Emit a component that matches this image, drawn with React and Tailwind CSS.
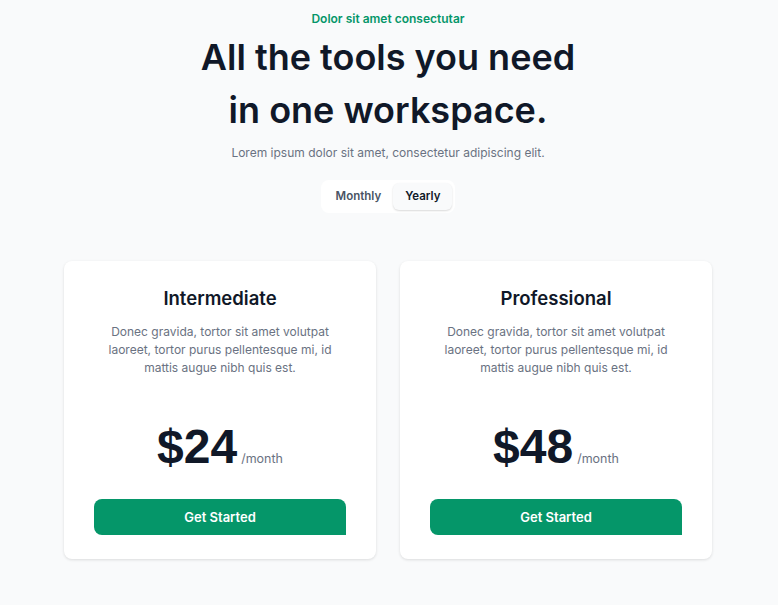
const plans = [
  { name: "Intermediate", price: "$24" },
  { name: "Professional", price: "$48" },
];

const PlanCard = ({ plan }) => {
  return (
    <div className="w-[312px] bg-white rounded-lg shadow-[0_1px_3px_rgba(0,0,0,0.12)] px-[30px] pt-6 pb-6 flex flex-col items-center">
      <h3 className="text-[18.5px] leading-[26px] font-semibold text-gray-900">{plan.name}</h3>
      <p className="mt-3 text-[12px] leading-[18px] text-gray-500 text-center">
        Donec gravida, tortor sit amet volutpat
        <br />
        laoreet, tortor purus pellentesque mi, id
        <br />
        mattis augue nibh quis est.
      </p>
      <div className="mt-[46px] flex items-end">
        <span className="font-['Liberation_Sans',Arial,sans-serif] font-bold text-[48px] leading-none text-gray-900">
          {plan.price}
        </span>
        <span className="ml-1 mb-0.5 text-[12.5px] text-gray-500">/month</span>
      </div>
      <button className="mt-7 w-full h-9 pt-px bg-[#059669] text-white text-[13px] font-semibold rounded-lg rounded-br-none">
        Get Started
      </button>
    </div>
  );
};

export default function App() {
  return (
    <div className="min-h-[605px] bg-gray-50 font-['Inter',sans-serif] flex flex-col items-center pt-[11px] pr-[2px]">
      <p className="text-[12px] leading-4 font-semibold text-[#059669]">Dolor sit amet consectutar</p>
      <h1 className="mt-[4px] text-[36px] leading-[53px] font-semibold text-gray-900 text-center">
        All the tools you need
        <br />
        in one workspace.
      </h1>
      <p className="mt-[6px] text-[12px] leading-5 text-gray-500">
        Lorem ipsum dolor sit amet, consectetur adipiscing elit.
      </p>
      <div className="mt-[17px] bg-white rounded-lg p-[3px] flex">
        <button className="h-[27px] px-3 text-[11.5px] font-semibold text-gray-600 rounded-md">Monthly</button>
        <button className="h-[27px] px-3 text-[11.5px] font-semibold text-gray-900 rounded-md bg-gray-50 shadow-[0_1px_2px_rgba(0,0,0,0.15)]">
          Yearly
        </button>
      </div>
      <div className="mt-[48px] flex gap-6">
        {plans.map((plan) => (
          <PlanCard key={plan.name} plan={plan} />
        ))}
      </div>
    </div>
  );
}
